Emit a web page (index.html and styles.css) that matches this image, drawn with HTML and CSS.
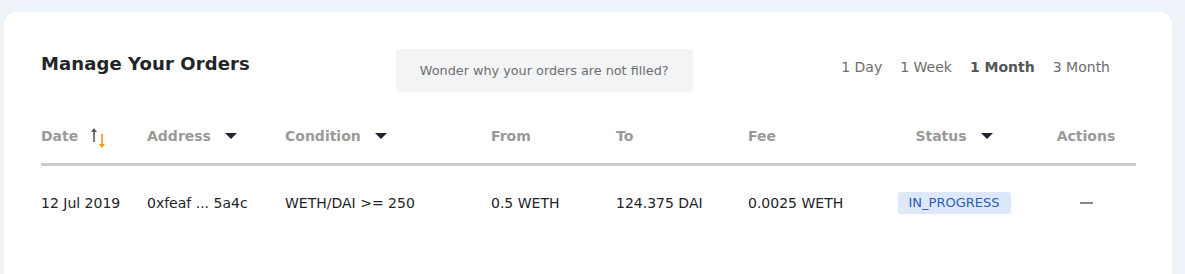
FILE: index.html
```html
<!DOCTYPE html>
<html>
<head>
<meta charset="utf-8">
<link rel="stylesheet" href="styles.css">
</head>
<body>
<div class="card">
  <div class="topbar">
    <h2 class="title">Manage Your Orders</h2>
    <div class="hint">Wonder why your orders are not filled?</div>
    <div class="filters">
      <span class="filter">1 Day</span>
      <span class="filter">1 Week</span>
      <span class="filter active">1 Month</span>
      <span class="filter">3 Month</span>
    </div>
  </div>
  <div class="table">
    <div class="row head">
      <div class="cell">Date
        <svg class="sort" width="16" height="24" viewBox="0 0 16 24">
          <path d="M4 2 L1 6 L3.2 6 L3.2 16 L4.8 16 L4.8 6 L7 6 Z" fill="#555a60"/>
          <path d="M11.2 8 L12.8 8 L12.8 18 L15 18 L12 22 L9 18 L11.2 18 Z" fill="#f5920f"/>
        </svg>
      </div>
      <div class="cell">Address <span class="caret"></span></div>
      <div class="cell">Condition <span class="caret"></span></div>
      <div class="cell">From</div>
      <div class="cell">To</div>
      <div class="cell">Fee</div>
      <div class="cell center">Status <span class="caret"></span></div>
      <div class="cell center">Actions</div>
    </div>
    <div class="row body">
      <div class="cell">12 Jul 2019</div>
      <div class="cell">0xfeaf ... 5a4c</div>
      <div class="cell">WETH/DAI &gt;= 250</div>
      <div class="cell">0.5 WETH</div>
      <div class="cell">124.375 DAI</div>
      <div class="cell">0.0025 WETH</div>
      <div class="cell center"><span class="badge">IN_PROGRESS</span></div>
      <div class="cell center"><span class="dash"></span></div>
    </div>
  </div>
</div>
</body>
</html>
```
FILE: styles.css
```css
html, body {
  margin: 0;
  padding: 0;
  background: #eef3fa;
  font-family: "DejaVu Sans", "Open Sans", sans-serif;
}
body {
  padding: 12px 13px 0 4px;
  height: 274px;
  box-sizing: border-box;
  overflow: hidden;
}
.card {
  background: #ffffff;
  border-radius: 12px 12px 0 0;
  height: 262px;
  padding: 37px 36px 0 37px;
  box-sizing: border-box;
}
.topbar {
  display: flex;
  align-items: flex-start;
  height: 43px;
}
.title {
  margin: 3px 0 0 0;
  font-size: 18px;
  font-weight: 600;
  color: #222428;
  letter-spacing: 0.1px;
  line-height: 24px;
}
.hint {
  margin-left: 146px;
  width: 297px;
  height: 43px;
  background: #f3f4f6;
  border-radius: 4px;
  display: flex;
  align-items: center;
  justify-content: center;
  font-size: 12.8px;
  color: #6f6f73;
}
.filters {
  margin-left: auto;
  margin-right: 26px;
  display: flex;
  gap: 18px;
  margin-top: 8px;
  font-size: 14px;
  color: #6d6d6d;
  line-height: 20px;
}
.filter.active {
  font-weight: 700;
  color: #555;
}
.table {
  margin-top: 24px;
}
.row {
  display: grid;
  grid-template-columns: 106px 138px 206px 125px 132px 124px 164px 100px;
  align-items: center;
}
.row.head {
  height: 50px;
  border-bottom: 3px solid #cccccc;
  box-sizing: border-box;
  font-size: 14px;
  font-weight: 600;
  color: #9a9a9a;
  padding-bottom: 8px;
}
.row.body {
  height: 76px;
  font-size: 14px;
  color: #222428;
  padding-bottom: 2px;
  box-sizing: border-box;
}
.cell {
  display: flex;
  align-items: center;
  white-space: nowrap;
}
.cell.center {
  justify-content: center;
}
.sort {
  margin-left: 12px;
  margin-top: 4px;
}
.caret {
  display: inline-block;
  width: 0;
  height: 0;
  border-left: 6px solid transparent;
  border-right: 6px solid transparent;
  border-top: 6px solid #1f2430;
  margin-left: 14px;
}
.badge {
  background: #dde9fb;
  color: #2a5cb8;
  font-size: 13px;
  padding: 3px 11px;
  border-radius: 3px;
  line-height: 16px;
}
.dash {
  display: inline-block;
  width: 13px;
  height: 2px;
  background: #888;
}
```
